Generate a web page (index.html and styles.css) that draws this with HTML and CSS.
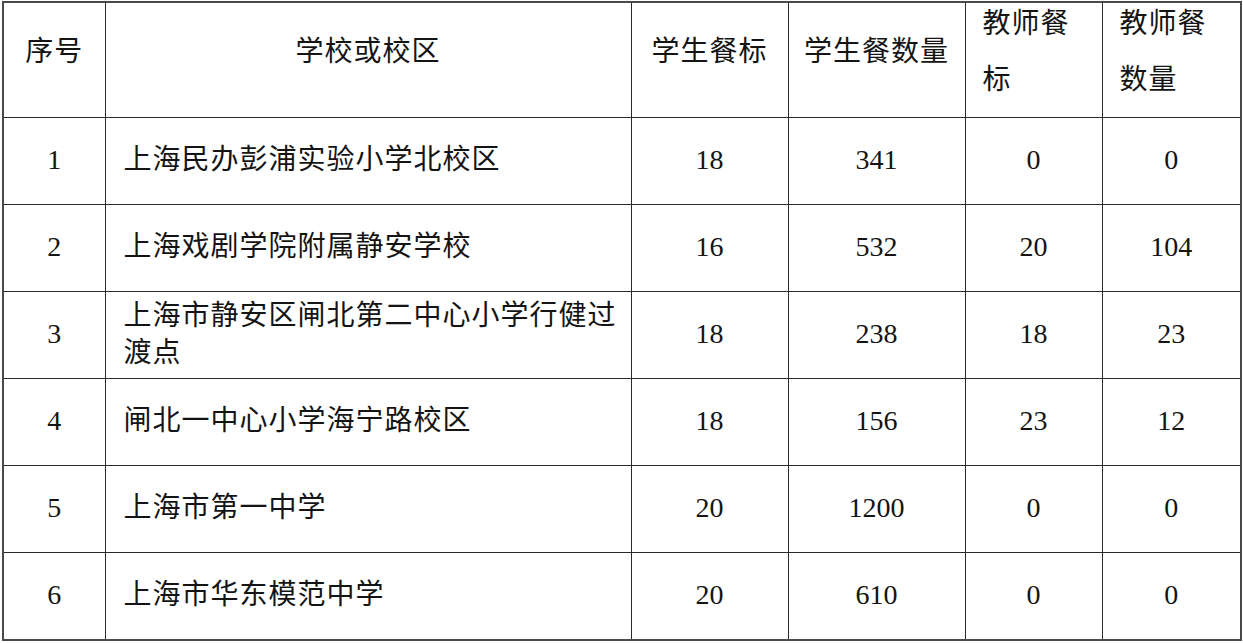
FILE: index.html
```html
<!DOCTYPE html>
<html lang="zh-CN">
<head>
<meta charset="utf-8">
<title>学校餐标</title>
<link rel="stylesheet" href="styles.css">
</head>
<body>
<table class="meals">
  <colgroup>
    <col class="c-no">
    <col class="c-school">
    <col class="c-sstd">
    <col class="c-snum">
    <col class="c-tstd">
    <col class="c-tnum">
  </colgroup>
  <thead>
    <tr class="head-row">
      <th><div class="head">序号</div></th>
      <th><div class="head">学校或校区</div></th>
      <th><div class="head">学生餐标</div></th>
      <th><div class="head">学生餐数量</div></th>
      <th class="left"><div class="head">教师餐标</div></th>
      <th class="left"><div class="head">教师餐数量</div></th>
    </tr>
  </thead>
  <tbody>
    <tr><td>1</td><td class="name">上海民办彭浦实验小学北校区</td><td>18</td><td>341</td><td>0</td><td>0</td></tr>
    <tr><td>2</td><td class="name">上海戏剧学院附属静安学校</td><td>16</td><td>532</td><td>20</td><td>104</td></tr>
    <tr><td>3</td><td class="name">上海市静安区闸北第二中心小学行健过渡点</td><td>18</td><td>238</td><td>18</td><td>23</td></tr>
    <tr><td>4</td><td class="name">闸北一中心小学海宁路校区</td><td>18</td><td>156</td><td>23</td><td>12</td></tr>
    <tr><td>5</td><td class="name">上海市第一中学</td><td>20</td><td>1200</td><td>0</td><td>0</td></tr>
    <tr><td>6</td><td class="name">上海市华东模范中学</td><td>20</td><td>610</td><td>0</td><td>0</td></tr>
  </tbody>
</table>
</body>
</html>
```

FILE: styles.css
```css
html, body {
  margin: 0;
  padding: 0;
  background: #ffffff;
}

.meals {
  margin: 1px 0 0 2px;
  width: 1238px;
  table-layout: fixed;
  border-collapse: collapse;
  border: 2px solid #4a4a4a;
  font-family: "Liberation Serif", "Noto Sans CJK SC", serif;
  font-size: 28px;
  color: #141414;
}

.c-no { width: 102px; }
.c-school { width: 526px; }
.c-sstd { width: 157px; }
.c-snum { width: 177px; }
.c-tstd { width: 137px; }
.c-tnum { width: 139px; }

.meals th,
.meals td {
  border: 1.5px solid #2a2a2a;
  padding: 0 8px;
  text-align: center;
  vertical-align: middle;
  overflow: visible;
}

.meals th {
  font-weight: normal;
  letter-spacing: 1px;
  vertical-align: top;
  height: 114px;
  padding-top: 0;
  padding-bottom: 0;
}

.meals th.left {
  text-align: left;
  padding-left: 17px;
  padding-right: 17px;
}

.head {
  height: 98px;
  display: flex;
  flex-direction: column;
  justify-content: center;
  line-height: 56px;
}

.meals tbody tr {
  height: 87px;
}

.meals td {
  line-height: 37px;
  padding-bottom: 3px;
}

.meals td.name {
  text-align: left;
  letter-spacing: 1px;
  padding-left: 18px;
  padding-right: 12px;
}
```
